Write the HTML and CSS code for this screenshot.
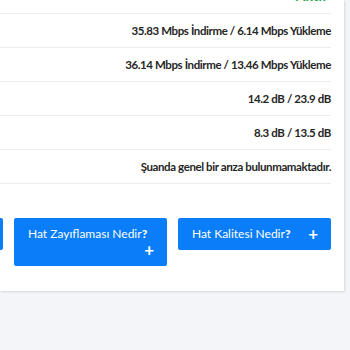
FILE: index.html
```html
<!DOCTYPE html>
<html lang="tr"><head><meta charset="utf-8"><link rel="stylesheet" href="styles.css"></head>
<body>
<div class="card">
  <div class="rows">
    <div class="row first"><span class="ok">Aktif</span></div>
    <div class="row">35.83 Mbps İndirme / 6.14 Mbps Yükleme</div>
    <div class="row">36.14 Mbps İndirme / 13.46 Mbps Yükleme</div>
    <div class="row">14.2 dB / 23.9 dB</div>
    <div class="row">8.3 dB / 13.5 dB</div>
    <div class="row">Şuanda genel bir arıza bulunmamaktadır.</div>
  </div>
  <div class="buttons">
    <div class="btn"><span class="label">Sinyal Gücü Nedir<b>?</b></span><span class="plus">+</span></div>
    <div class="btn"><span class="label">Hat Zayıflaması Nedir<b>?</b></span><span class="plus">+</span></div>
    <div class="btn"><span class="label">Hat Kalitesi Nedir<b>?</b></span><span class="plus">+</span></div>
  </div>
</div>
</body></html>
```
FILE: styles.css
```css
html,body{margin:0;padding:0;}
body{background:#f4f5f9;font-family:"Lato","Noto Sans",sans-serif;width:350px;height:350px;overflow:hidden;}
.card{width:331px;padding-right:13px;padding-bottom:25px;background:#fff;box-shadow:1px 1px 2px rgba(0,0,0,.12);overflow:hidden;}
.rows{margin-top:-20px;}
.row{height:33px;border-bottom:1px solid #ececef;display:flex;align-items:center;justify-content:flex-end;font-size:11.5px;font-weight:700;letter-spacing:-0.4px;color:#262626;white-space:nowrap;}
.first{align-items:flex-end;}
.ok{color:#2fa84f;margin-right:4px;font-size:14px;line-height:15px;margin-bottom:10px;letter-spacing:0;}
.buttons{display:flex;justify-content:flex-end;gap:11px;margin-top:34px;align-items:flex-start;}
.btn{flex:0 0 153px;box-sizing:border-box;background:#0a7df8;color:#fff;border-radius:2px;padding:8px 13px 8px 14px;display:flex;flex-wrap:wrap;align-items:center;font-size:12px;line-height:16px;}
.btn b{font-weight:900;}
.label{white-space:nowrap;}
.plus{margin-left:auto;font-size:17px;font-weight:700;line-height:16px;padding-left:8px;}
```
